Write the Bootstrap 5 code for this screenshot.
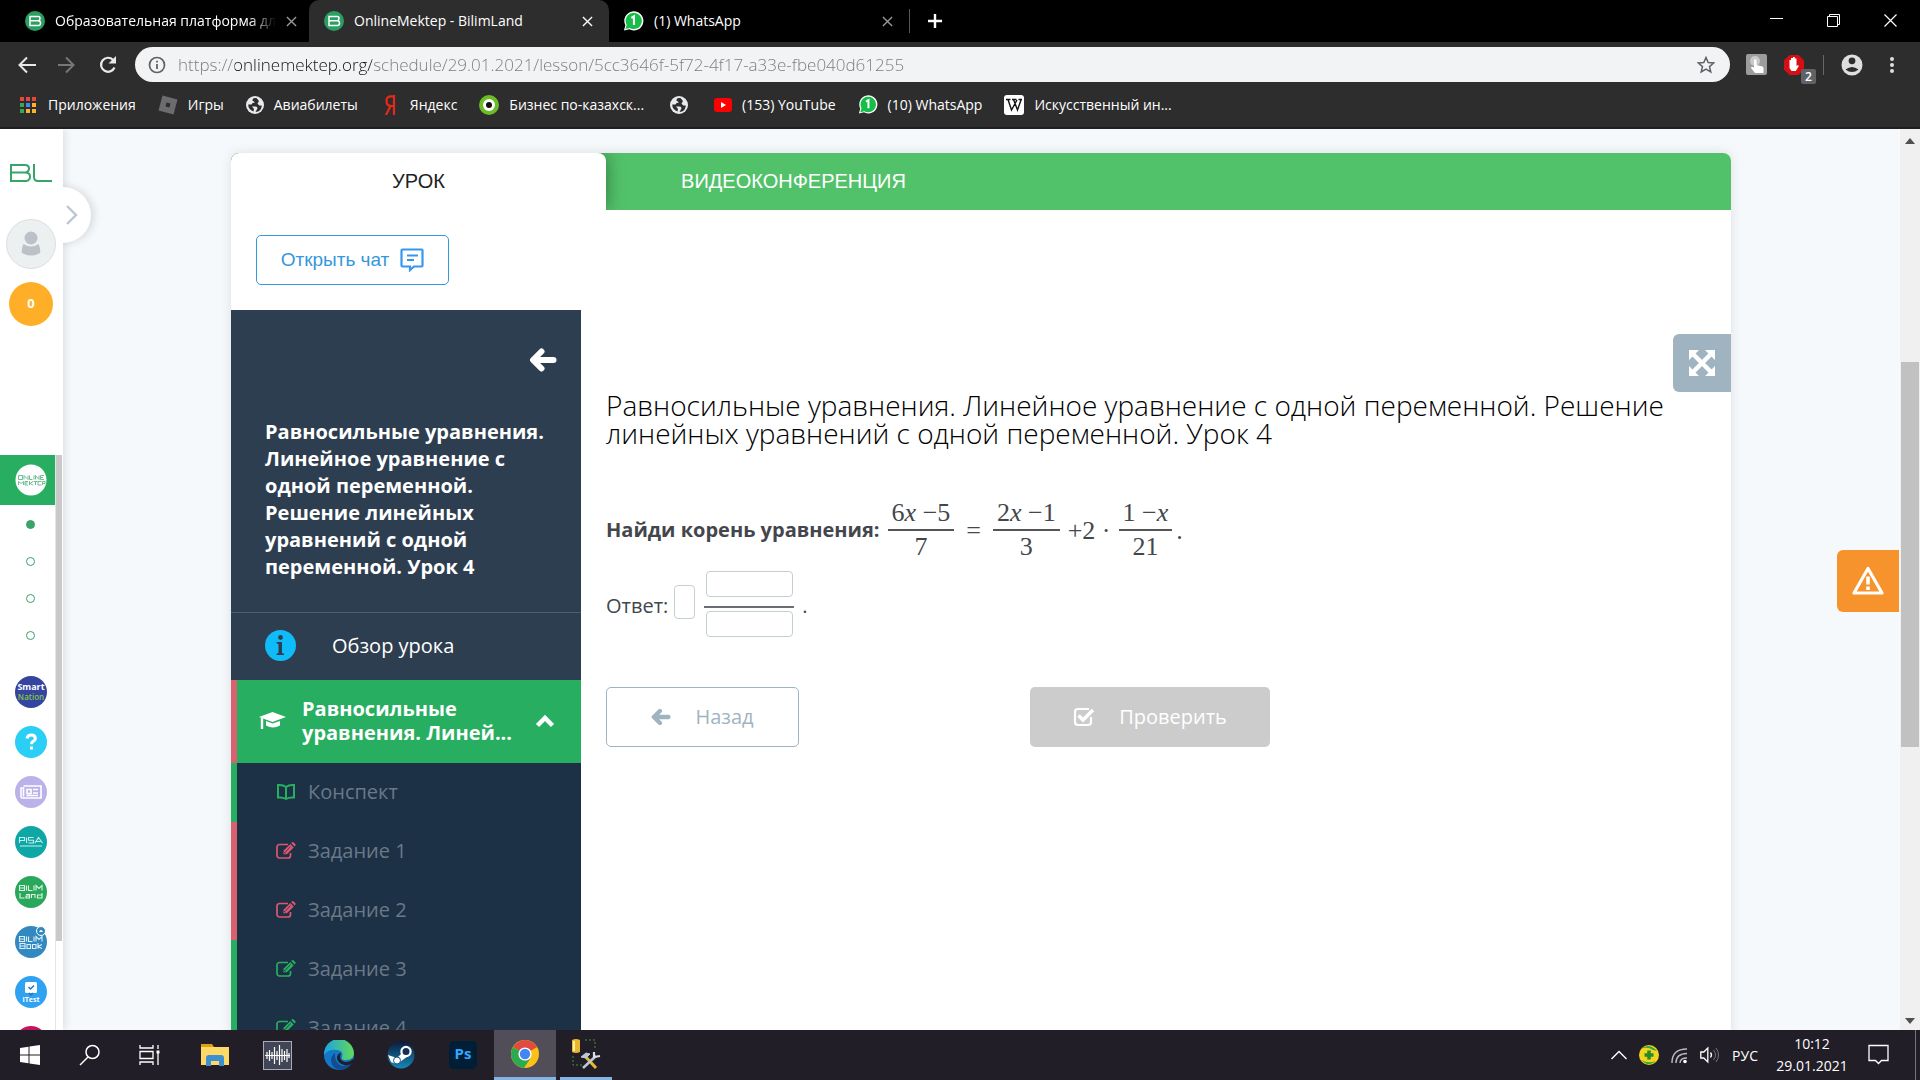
<!DOCTYPE html>
<html lang="ru">
<head>
<meta charset="utf-8">
<meta name="viewport" content="width=device-width, initial-scale=1">
<title>OnlineMektep - BilimLand</title>
<link href="https://cdn.jsdelivr.net/npm/bootstrap@5.3.0/dist/css/bootstrap.min.css" rel="stylesheet">
<style>
:root{--ui:"Open Sans","Noto Sans",sans-serif;--green:#27ae60;--navy:#2d3e50}
body{font-family:var(--ui);background:#f5f9fc;overflow:hidden}
svg{display:block;flex:none}
button,.plain{background:none;border:0;padding:0;color:inherit;text-decoration:none}
/* browser window */
.tabstrip{height:42px;background:#000;color:#fff;font-size:14px}
.btab{height:42px;width:300px;padding:0 12px 0 14px;gap:10px}
.btab.first{width:309px;padding-left:25px}
.btab.on{background:#2d2d2d;border-radius:10px 10px 0 0;padding-left:15px}
.btab button{color:#999;flex:none}
.btab .t{flex:1;min-width:0;white-space:nowrap;overflow:hidden;padding-bottom:2px}
.first .t{-webkit-mask-image:linear-gradient(90deg,#000 88%,transparent);mask-image:linear-gradient(90deg,#000 88%,transparent)}
.wins{gap:43px;padding-right:22px}
.tools{background:#2d2d2d;height:45px;padding:0 25px 0 16px;color:#e8e8e8}
.reload{margin-left:22px}
.more{margin-left:26px}
.omni{background:#f1f3f4;height:35px;border-radius:18px;padding:0 15px 0 13px;margin-left:17px;color:#5f6368}
.omni input{border:0;outline:0;font-family:var(--ui);font-weight:350;font-size:17px;height:35px;margin:0 8px 0 12px;padding:0;background:linear-gradient(90deg,#757a80 57px,#101114 57px,#101114 194px,#757a80 194px);background-clip:text;-webkit-background-clip:text;-webkit-text-fill-color:transparent}
.marks{background:#2d2d2d;height:42px;padding:0 18px 5px;gap:22px;color:#fff;font-size:14px;border-bottom:2px solid #202020}
.marks a{gap:10px;white-space:nowrap}
.extbadge{right:-11px;bottom:-8px;background:#5f6368;color:#fff;font-size:12px;line-height:15px;width:15px;border-radius:2px;text-align:center;font-weight:600}
/* page */
.rail{width:63px;background:#fff;box-shadow:0 0 10px #00000026;z-index:2}
.toggle{left:35px;top:58px;width:56px;height:56px;border-radius:50%;background:#fff;box-shadow:3px 0 8px #00000020;clip-path:inset(-10px -12px -10px 28px);padding-left:30px!important}
.ava{width:50px;height:50px;margin-top:37px;border-radius:50%;background:#ecf0f1;border:1px solid #dcdfe2}
.coins{width:44px;height:44px;margin-top:13px;border-radius:50%;background:#ffae27;color:#fff;font-size:13px;font-weight:700}
.railtop{width:62px;height:326px;padding-top:35px}
.raillist{width:56px;border-right:1px solid #e4e4e4}
.railthumb{width:6px;height:486px;background:#c9c9c9}
.cur{height:50px;width:55px;background:var(--green);padding-left:6px}
.dots{height:163px;padding:15px 0 0 26px;gap:28px}
.dots i{width:9px;height:9px;border:1px solid #3aa26b;border-radius:50%}
.dots i.on{background:#3aa26b}
.apps{padding:8px 0 0 15px;gap:18px}
.lesson{max-width:1500px;margin:24px auto 0;background:#fff;border-radius:8px 8px 0 0;box-shadow:0 0 12px #0000001a}
.tabsbar{height:57px;background:#52c26a;border-radius:8px 8px 0 0;font:20px "Liberation Sans",Arial,sans-serif;overflow:hidden}
.tabsbar .a{width:25%;background:#fff;color:#222;border-radius:8px 8px 0 0;box-shadow:0 0 18px #00000066}
.tabsbar .b{width:25%;color:#fff}
.chat{height:50px;width:193px;margin:25px 0 25px 25px;border:1px solid #3498db;border-radius:5px;color:#3498db;font:19px "Liberation Sans",Arial,sans-serif;gap:11px}
.side{width:350px;background:var(--navy);color:#fff;font-size:20px}
.side h2{font-size:20px;line-height:27px;font-weight:700;padding:0 34px;margin:47px 0 32px}
.backrow{height:61px;padding:38px 24px 0 0}
.over{height:68px;border-top:1px solid #4a5f70;padding:0 0 2px 34px;gap:36px}
.topic{height:83px;background:var(--green);border-left:6px solid #d9606e;line-height:24px;padding:0 26px 2px 22px}
.topic b{margin-left:16px;flex:1;font-weight:700}
.step{height:59px;background:#1c3046;border-left:6px solid var(--green);color:#6a7987;padding:0 0 2px 39px;gap:12px}
.step svg{color:var(--green)}
.step.bad{border-color:#d9606e}.step.bad svg{color:#e0566f}
.work{padding:0 25px;color:#43464c}
.work h1{font-size:28px;line-height:28px;color:#000;margin:81px 0 0;font-weight:350}
.expand{right:0;top:24px;width:58px;height:58px;background:#9fb4c0;border-radius:6px 0 0 6px}
.task{font-size:20px;margin-top:50px;height:66px}
.math{font-family:"Liberation Serif",serif;font-size:26px}
.fr{display:flex;flex-direction:column;text-align:center;line-height:32px}
.fr span:first-child{border-bottom:2px solid #555;padding:0 4px}
.ans{font-size:20px;height:68px;margin-top:7px}
.ans input{border:1px solid #c4cfd3;border-radius:4px;padding:0 3px;background:#fff;width:87px;height:26px}
.ans .whole{width:21px;height:34px;margin:0 9px 4px 6px}
.bar{height:2px;width:90px;margin:9px 0 3px;background:#6a6d73}
.acts{margin-top:49px;gap:231px;font-size:20px}
.acts button{height:60px;border-radius:5px;gap:24px}
.prev{width:193px;border:1px solid #9fb4c0;color:#9fb4c0}
.check{width:240px;background:#ccc;color:#fff}
.vbar{width:21px;background:#f0f0f0;border-left:1px solid #fafafa;padding:9px 0 6px}
.vthumb{width:18px;height:385px;margin-top:218px;background:#c1c1c1}
.warn{right:21px;top:421px;width:62px;height:62px;background:#f7932d;border-radius:6px 0 0 6px;z-index:3}
/* taskbar */
.os{height:50px;background:#211e27;color:#fff;flex:none}
.ic{width:62px;height:50px}
.ic.s{width:60px}
.ic.tool{width:52px}
.run{border-bottom:3px solid #83b4e6}
.run.front{background:#524e59}
.tray{gap:12px}
.clock{font-size:14px;line-height:22px;width:84px}
</style>
<script src="https://cdn.jsdelivr.net/npm/bootstrap@5.3.0/dist/js/bootstrap.bundle.min.js"></script>
</head>
<body class="vh-100 d-flex flex-column">
<svg width="0" height="0" class="position-absolute" aria-hidden="true"><defs>
<symbol id="bl" viewBox="0 0 20 20"><circle cx="10" cy="10" r="10" fill="#2b9e62"/><path d="M5 5.500h8.500q1.500 0 1.500 2t-1.500 2.300q2 .2 2 2.400t-2 2.300H5zM5 9.800h8.500" fill="none" stroke="#fff" stroke-width="1.500"/></symbol>
<symbol id="wa" viewBox="0 0 22 22"><path d="M1 21l1.500-5.500A10 10 0 1 1 6.500 19.600z" fill="#fff"/><path d="M2.500 19.500l1.400-4.300A8.500 8.500 0 1 1 7 18.300z" fill="#16bd48"/><path d="M8.800 7.800l2.700-1.600v9" fill="none" stroke="#fff" stroke-width="2.200"/></symbol>
<symbol id="x" viewBox="0 0 12 12"><path d="M1 1l10 10M11 1L1 11" stroke="currentColor" stroke-width="1.500"/></symbol>
<symbol id="globe" viewBox="0 0 18 18"><circle cx="9" cy="9" r="9" fill="#e8eaed"/><path d="M10.500 2Q6 1.500 6.500 4.500L9 6.500q-3 0-3.500 2H2.200q0 5 5.300 7l.5-2.500-2-2.500h3.500q2 0 2 1.800L9.500 16q6-.5 6.300-6.500h-2.600l-1.700-2 1.500-2.500z" fill="#2d2d2d"/></symbol>
<symbol id="edit" viewBox="0 0 20 18"><path d="M12 2.500H3.500A2.500 2.500 0 0 0 1 5v8.500A2.500 2.500 0 0 0 3.500 16H12a2.500 2.500 0 0 0 2.500-2.500V11" fill="none" stroke="currentColor" stroke-width="1.700"/><path d="M7.500 8.800L14.300 2l3.400 3.400-6.800 6.800H7.500zM15.200 1.100l.9-.8q.7-.5 1.300 0l2 2q.6.700 0 1.300l-.8.9z" fill="currentColor"/><path d="M9 10.500l5.500-6M8 10l1.500 1.500" stroke="#1c3046" stroke-width=".8"/></symbol>
<symbol id="arr" viewBox="0 0 28 24"><path d="M12.500 3.500L4 12l8.500 8.500M5 12h19.500" fill="none" stroke="currentColor" stroke-width="6" stroke-linecap="round" stroke-linejoin="round"/></symbol>
</defs></svg>

<header>
<nav class="tabstrip d-flex align-items-center" aria-label="Вкладки">
 <div class="btab first d-flex align-items-center"><svg width="20" height="20"><use href="#bl"/></svg><span class="t">Образовательная платформа для</span><button aria-label="Закрыть"><svg width="11" height="11"><use href="#x"/></svg></button></div>
 <div class="btab on d-flex align-items-center"><svg width="20" height="20"><use href="#bl"/></svg><span class="t">OnlineMektep - BilimLand</span><button class="text-light me-1" aria-label="Закрыть"><svg width="11" height="11"><use href="#x"/></svg></button></div>
 <div class="btab d-flex align-items-center"><svg width="21" height="22"><use href="#wa"/></svg><span class="t">(1) WhatsApp</span><button class="me-1" aria-label="Закрыть"><svg width="11" height="11"><use href="#x"/></svg></button></div>
 <svg width="40" height="26" viewBox="0 0 40 26"><path d="M0.500 1v24" stroke="#555"/><path d="M26 6v14M19 13h14" stroke="#fff" stroke-width="2.400"/></svg>
 <div class="wins ms-auto d-flex align-items-center">
  <button aria-label="Свернуть"><svg width="14" height="14"><path d="M0 4.500h13" stroke="#fff"/></svg></button>
  <button aria-label="Окно"><svg width="14" height="14"><path d="M.5 2.500h10v10H.5zM2.500 2.500v-2h10v10h-2" fill="none" stroke="#fff"/></svg></button>
  <button aria-label="Закрыть окно"><svg width="14" height="14"><path d="M.5.500l12 12M12.500.500l-12 12" stroke="#fff" stroke-width="1.200"/></svg></button>
 </div>
</nav>
<div class="tools d-flex align-items-center">
 <button aria-label="Назад"><svg width="22" height="20"><path d="M20 10H4M11 2.500L3.500 10l7.500 7.500" fill="none" stroke="#e8e8e8" stroke-width="2"/></svg></button>
 <button class="ms-3" aria-label="Вперед"><svg width="22" height="20"><path d="M4 10h16M12 2.500l7.500 7.500-7.500 7.500" fill="none" stroke="#777" stroke-width="2"/></svg></button>
 <button class="reload" aria-label="Обновить"><svg width="20" height="20"><path d="M16.500 12.500A7 7 0 1 1 15 4.800" fill="none" stroke="#e8e8e8" stroke-width="2.200"/><path d="M18 1v7.500h-7.500z" fill="#e8e8e8"/></svg></button>
 <div class="omni d-flex align-items-center flex-grow-1">
  <svg width="18" height="18"><circle cx="9" cy="9" r="7.500" fill="none" stroke="#5f6368" stroke-width="1.700"/><path d="M9 8v5M9 4.800v1.800" stroke="#5f6368" stroke-width="1.800"/></svg>
  <input class="flex-grow-1" type="text" aria-label="Адрес" value="https://onlinemektep.org/schedule/29.01.2021/lesson/5cc3646f-5f72-4f17-a33e-fbe040d61255">
  <svg width="18" height="18"><path d="M9 1.500l2.200 5.100 5.500.4-4.200 3.600 1.300 5.400L9 13.100 4.200 16l1.300-5.400L1.300 7l5.500-.4z" fill="none" stroke="#5f6368" stroke-width="1.500"/></svg>
 </div>
 <button class="ms-3" aria-label="Расширение"><svg width="21" height="21"><rect width="21" height="21" rx="2" fill="#9c9c9c"/><circle cx="9" cy="7" r="5" fill="#c9c9c9"/><path d="M8 6q1.500-1.500 2.500 0v5l6 1.500q1 .5 1 2V19H9l-4-5q0-2 3-.500z" fill="#fff"/></svg></button>
 <button class="ms-3 position-relative" aria-label="AdBlock"><svg width="22" height="22"><path d="M6.500 1h9L21 6.500v9L15.500 21h-9L1 15.500v-9z" fill="#d80f12"/><path d="M6.500 10V6h1.500v4V4h2v6-7h1.800v7-5.500h1.700V12l1.500-1 .8 1-3 5H8.500l-2-3z" fill="#fff"/></svg><span class="extbadge position-absolute">2</span></button>
 <svg class="ms-3" width="4" height="20"><path d="M2.500 0v20" stroke="#666"/></svg>
 <button class="ms-3" aria-label="Профиль"><svg width="22" height="22"><circle cx="11" cy="11" r="10.500" fill="#dedede"/><circle cx="11" cy="6.800" r="3.400" fill="#2d2d2d"/><path d="M4.500 15.500q6.500-5 13 0-6.500 5-13 0z" fill="#2d2d2d"/></svg></button>
 <button class="more" aria-label="Меню"><svg width="6" height="18"><g fill="#dedede"><circle cx="3" cy="3" r="2"/><circle cx="3" cy="9" r="2"/><circle cx="3" cy="15" r="2"/></g></svg></button>
</div>
<nav class="marks d-flex align-items-center" aria-label="Закладки">
 <a class="plain d-flex align-items-center" href="#"><svg width="20" height="18"><g fill="#e8453c"><path d="M2 1h4v4H2zM8 1h4v4H8zM14 1h4v4h-4z"/></g><path d="M2 7h4v4H2zM2 13h4v4H2z" fill="#34a853"/><path d="M8 7h4v4H8z" fill="#4285f4"/><path d="M8 13h4v4H8zM14 7h4v4h-4zM14 13h4v4h-4z" fill="#fbb32d"/></svg>Приложения</a>
 <a class="plain d-flex align-items-center" href="#"><svg width="20" height="20"><path d="M4.500.500L19.500 4.500 15.500 19.500.500 15.500z" fill="#6c6c6e"/><path d="M8.500 7.500l4 1-1 4-4-1z" fill="#2d2d2d"/></svg>Игры</a>
 <a class="plain d-flex align-items-center" href="#"><svg width="18" height="18"><use href="#globe"/></svg>Авиабилеты</a>
 <a class="plain d-flex align-items-center" href="#"><svg width="20" height="20"><path d="M14 0v20M14 1.300h-3Q6.500 1.300 6.500 6t4.500 5h3M10.500 11L6 20" fill="none" stroke="#e52a1a" stroke-width="2.200"/></svg>Яндекс</a>
 <a class="plain d-flex align-items-center" href="#"><svg width="20" height="20"><circle cx="10" cy="10" r="10" fill="#6dbb27"/><circle cx="10" cy="10" r="6" fill="#fff"/><circle cx="10" cy="10" r="3" fill="#111"/></svg>Бизнес по-казахск...</a>
 <a class="plain d-flex align-items-center px-1" href="#" aria-label="Закладка"><svg width="18" height="18"><use href="#globe"/></svg></a>
 <a class="plain d-flex align-items-center" href="#"><svg width="18" height="18"><rect y="2" width="18" height="14" rx="3" fill="#f00"/><path d="M7 6l5 3-5 3z" fill="#fff"/></svg>(153) YouTube</a>
 <a class="plain d-flex align-items-center" href="#"><svg width="20" height="21"><use href="#wa"/></svg>(10) WhatsApp</a>
 <a class="plain d-flex align-items-center" href="#"><svg width="20" height="20"><rect width="20" height="20" rx="3" fill="#fff"/><path d="M2 4.500h4.500M8 4.500h4.500M14.500 4.500H18M4 4.500L7.500 15 13 5M9.500 4.500L13.500 15l3.500-10" fill="none" stroke="#111" stroke-width="1.400"/></svg>Искусственный ин...</a>
</nav>
</header>

<div class="d-flex flex-grow-1 position-relative overflow-hidden">
<aside class="rail flex-shrink-0 position-relative d-flex flex-column">
 <button class="toggle position-absolute" aria-label="Развернуть меню"><svg width="14" height="22"><path d="M2 2l9 9-9 9" fill="none" stroke="#bcc6d0" stroke-width="2.400"/></svg></button>
 <div class="railtop d-flex flex-column align-items-center flex-shrink-0">
  <svg width="42" height="18"><path d="M1 1h14q4 0 4 3.500T15 8.500H1M15 8.500q5 0 5 4t-4 4.500H1V0M24 0v13q0 4 4 4h14" fill="none" stroke="#37a56a" stroke-width="2"/></svg>
  <div class="ava d-flex align-items-center justify-content-center"><svg width="20" height="26"><circle cx="10" cy="7" r="6.500" fill="#bcc1c7"/><path d="M2.500 13q7.500 5 15 0 2.500 5 1.500 9-9 5-18 0-1-4 1.500-9z" fill="#bcc1c7"/></svg></div>
  <div class="coins d-flex align-items-center justify-content-center">0</div>
 </div>
 <div class="d-flex flex-grow-1 overflow-hidden">
 <nav class="raillist flex-shrink-0" aria-label="Сервисы">
  <a href="#" class="cur plain d-flex align-items-center justify-content-center" aria-label="Online Mektep"><svg width="32" height="32"><circle cx="16" cy="16" r="15.500" fill="#fff"/><g fill="none" stroke="#72bd93" stroke-width="1"><path d="M3.500 11.500h4v4h-4zM9 15.500v-4l4 4v-4M14.500 11.500v4h3M19 11.500v4M20.500 15.500v-4l3.500 4v-4M29 11.500h-3.500v4H29M25.500 13.500H28M3.500 21v-3.500l2.500 2 2.500-2V21M13 17.500h-3V21h3M10 19h2.500M14.500 17v4M18 17.500l-3 2 3 1.500M18.500 17.500h4M20.500 17.500V21M26.500 17.500H23V21h3.500M27.500 21v-3.500H30v2h-2.500"/></g></svg></a>
  <div class="dots d-flex flex-column"><i class="on"></i><i></i><i></i><i></i></div>
  <div class="apps d-flex flex-column">
   <svg width="32" height="32" viewBox="0 0 32 32"><circle cx="16" cy="16" r="16" fill="#34449f"/><text x="16" y="14" font-size="9" font-weight="700" fill="#fff" text-anchor="middle">Smart</text><text x="16" y="24" font-size="8" font-weight="600" fill="#86c440" text-anchor="middle">Nation</text></svg>
   <svg width="32" height="32"><circle cx="16" cy="16" r="16" fill="#2bcff5"/><path d="M12 12.500q.5-3.500 4.300-3.500 4 0 4 3.300 0 2-2.200 3-1.600.8-1.600 3M16.500 20.500v3" fill="none" stroke="#fff" stroke-width="3"/></svg>
   <svg width="32" height="32"><circle cx="16" cy="16" r="16" fill="#bbb2ea"/><path d="M8.500 10H26v12H7.500Q6 22 6 20.500V12h2.500v8.500M12 13.500h4v4h-4zM18 13.500h5M18 17h5M11.500 19.500H23" fill="none" stroke="#fff" stroke-width="1.600"/></svg>
   <svg width="32" height="32"><circle cx="16" cy="16" r="16" fill="#0fa7a6"/><path d="M4.500 17v-5.500h5v3h-5M11.500 11.500V17M18.500 11.500h-5v2.700h5V17h-5M20 17l3.500-5.500L27.500 17M21.500 15.500h4M5 20h22" fill="none" stroke="#c5f1ec" stroke-width="1.100"/></svg>
   <svg width="32" height="32"><circle cx="16" cy="16" r="16" fill="#29a85b"/><path d="M4.500 9.500h5v5h-5zM4.500 12h5M11.500 9.500v5M13.500 9.500v5h4M19 9.500v5M21 14.500v-5l3 3 3-3v5M5 17v5h4.500M11 18.500h3.500V22H11v-2h3.500M16.500 22v-3.500H20V22M27 17v5h-4.500v-3H27" fill="none" stroke="#dff5e6" stroke-width="1.100"/></svg>
   <svg width="32" height="32"><circle cx="16" cy="16" r="16" fill="#3289bf"/><path d="M4.500 10.500h5v5h-5zM4.500 13h5M11.500 10.500v5M13.500 10.500v5h4M19 10.500v5M21 15.500v-5l3 3 3-3v5M5 17.500h5v5H5zM5 20h5M12 18.500h3.500v4H12zM17.500 18.500H21v4h-3.500zM23 17v5.500M27 18.500l-4 2 4 2" fill="none" stroke="#dbeefa" stroke-width="1.100"/><circle cx="26" cy="5" r="4.500" fill="#3289bf" stroke="#fff"/><path d="M24 6q2-4 4 0z" fill="#fff"/></svg>
   <svg width="32" height="32" viewBox="0 0 32 32"><circle cx="16" cy="16" r="16" fill="#2fa3f2"/><rect x="10" y="6" width="12" height="11" rx="1.500" fill="#fff"/><path d="M13.500 11l2 2 3.500-3.500M14 17l2 2 2-2" fill="none" stroke="#2277bb" stroke-width="1.500"/><text x="16" y="26" font-size="7" font-weight="700" fill="#fff" text-anchor="middle">iTest</text></svg>
   <svg width="32" height="32"><circle cx="16" cy="16" r="16" fill="#c8145c"/></svg>
  </div>
 </nav>
 <div class="railthumb"></div>
 </div>
</aside>

<main class="flex-grow-1 overflow-hidden">
 <div class="lesson">
  <div class="tabsbar d-flex"><button class="a">УРОК</button><button class="b px-3">ВИДЕОКОНФЕРЕНЦИЯ</button></div>
  <button class="chat d-flex align-items-center justify-content-center">Открыть чат <svg width="24" height="24"><path d="M2.500 1.500h19q1 0 1 1v15q0 1-1 1H14l-4 3.500v-3.500H2.500q-1 0-1-1v-15q0-1 1-1zM7 7.500h11M7 12h7" fill="none" stroke="#3498ee" stroke-width="2.200"/></svg></button>
  <div class="d-flex">
   <aside class="side flex-shrink-0">
    <div class="backrow d-flex justify-content-end"><button class="text-white" aria-label="Свернуть"><svg width="28" height="24"><use href="#arr"/></svg></button></div>
    <h2>Равносильные уравнения. Линейное уравнение с одной переменной. Решение линейных уравнений с одной переменной. Урок 4</h2>
    <a href="#" class="over text-decoration-none d-flex align-items-center text-white"><svg width="31" height="31"><circle cx="15.500" cy="15.500" r="15.500" fill="#0fbcf9"/><circle cx="15.500" cy="7.500" r="2.400" fill="#2d3e50"/><path d="M11.500 12h5.500v11l2 .8V25h-7.500v-1.200l2-.8v-9l-2-.7z" fill="#2d3e50"/></svg>Обзор урока</a>
    <a href="#" class="topic text-decoration-none d-flex align-items-center text-white"><svg width="27" height="20"><path d="M13.500 1L27 6l-13.500 5L0 6z" fill="#fff"/><path d="M7 10l6.500 2.500L21 10v4.500q-7 4-14 0z" fill="#fff"/><path d="M3 7v11" stroke="#fff" stroke-width="2.400"/></svg><b>Равносильные<br>уравнения. Линей...</b><svg width="20" height="16"><path d="M2.500 12.500L10 5l7.500 7.500" fill="none" stroke="#fff" stroke-width="4.500"/></svg></a>
    <a href="#" class="step text-decoration-none d-flex align-items-center"><svg width="20" height="18"><path d="M10 4Q7 1.500 2 2v12.500q5-.5 8 1.500 3-2 8-1.500V2q-5-.5-8 2zv12" fill="none" stroke="currentColor" stroke-width="2"/></svg>Конспект</a>
    <a href="#" class="step bad text-decoration-none d-flex align-items-center"><svg width="20" height="18"><use href="#edit"/></svg>Задание 1</a>
    <a href="#" class="step bad text-decoration-none d-flex align-items-center"><svg width="20" height="18"><use href="#edit"/></svg>Задание 2</a>
    <a href="#" class="step text-decoration-none d-flex align-items-center"><svg width="20" height="18"><use href="#edit"/></svg>Задание 3</a>
    <a href="#" class="step text-decoration-none d-flex align-items-center"><svg width="20" height="18"><use href="#edit"/></svg>Задание 4</a>
   </aside>
   <section class="work flex-grow-1 position-relative">
    <button class="expand position-absolute d-flex align-items-center justify-content-center" aria-label="На весь экран"><svg width="28" height="28"><path d="M5 5l18 18M23 5L5 23" stroke="#fff" stroke-width="4.500"/><path d="M1 1h10L1 11zM27 1v10L17 1zM1 27V17l10 10zM27 27H17l10-10z" fill="#fff"/></svg></button>
    <h1>Равносильные уравнения. Линейное уравнение с одной переменной. Решение линейных уравнений с одной переменной. Урок 4</h1>
    <div class="task d-flex align-items-center"><b>Найди корень уравнения:</b>
     <div class="math d-flex align-items-center ms-2"><div class="fr"><span>6<i>x</i> −5</span><span>7</span></div><span class="px-2 mx-1">=</span><div class="fr"><span>2<i>x</i> −1</span><span>3</span></div><span class="px-2">+2 ·</span><div class="fr"><span>1 −<i>x</i></span><span>21</span></div><span class="ps-1">.</span></div></div>
    <div class="ans d-flex align-items-center"><label class="pt-1" for="whole">Ответ:</label><input id="whole" class="whole"><div class="d-flex flex-column align-items-center"><input aria-label="Числитель"><div class="bar"></div><input aria-label="Знаменатель"></div><span class="ms-2 pt-1">.</span></div>
    <div class="acts d-flex"><button class="prev d-flex align-items-center justify-content-center"><svg width="20" height="18"><use href="#arr"/></svg>Назад</button><button class="check d-flex align-items-center justify-content-center"><svg width="22" height="20"><path d="M18 10v5q0 3-3 3H5q-3 0-3-3V5q0-3 3-3h11" fill="none" stroke="#fff" stroke-width="2.200"/><path d="M5.500 8.500l4.500 4.500L20 3" fill="none" stroke="#fff" stroke-width="3.500"/></svg>Проверить</button></div>
   </section>
  </div>
 </div>
</main>
<button class="warn position-absolute d-flex align-items-center justify-content-center" aria-label="Сообщить об ошибке"><svg width="34" height="32"><path d="M17 3.500L31 28H3z" fill="none" stroke="#fff" stroke-width="3.200" stroke-linejoin="round"/><path d="M17 11.500v8M17 21.500v3.500" stroke="#fff" stroke-width="3.600"/></svg></button>
<div class="vbar flex-shrink-0 d-flex flex-column align-items-center"><svg width="10" height="6"><path d="M0 6l5-6 5 6z" fill="#505050"/></svg><div class="vthumb"></div><svg class="mt-auto" width="10" height="6"><path d="M0 0l5 6 5-6z" fill="#505050"/></svg></div>
</div>

<footer class="os d-flex align-items-center">
 <button class="ic s d-flex align-items-center justify-content-center" aria-label="Пуск"><svg width="20" height="20"><path d="M0 3l8.500-1.300v7.800H0zM9.500 1.500L20 0v9.500H9.500zM0 10.500h8.500v7.800L0 17zM9.500 10.500H20V20L9.500 18.500z" fill="#fff"/></svg></button>
 <button class="ic s d-flex align-items-center justify-content-center" aria-label="Поиск"><svg width="22" height="22"><circle cx="13.500" cy="8" r="6.500" fill="none" stroke="#fff" stroke-width="1.500"/><path d="M9 13l-8 8" stroke="#fff" stroke-width="1.500"/></svg></button>
 <button class="ic s d-flex align-items-center justify-content-center" aria-label="Задачи"><svg width="22" height="20"><path d="M1 0v3h13V0M1 20v-3h13v3M1 6.500h13v7H1zM19 0v4M19 8v12" fill="none" stroke="#fff" stroke-width="1.300"/><path d="M17.500 5.500h3v3h-3z" fill="#fff"/></svg></button>
 <button class="ic d-flex align-items-center justify-content-center ms-1" aria-label="Проводник"><svg width="28" height="24"><path d="M0 1h11l2 3H0z" fill="#dca017"/><path d="M0 4h28v18H0z" fill="#ffd968"/><path d="M5 23v-8q0-3 3-3h12q3 0 3 3v8h-5v-5h-8v5z" fill="#3f8fcf"/></svg></button>
 <button class="ic d-flex align-items-center justify-content-center" aria-label="Аудио"><svg width="29" height="29"><rect x=".5" y=".5" width="28" height="28" fill="#414656" stroke="#aab"/><path d="M2 14.500h25M4 11v7M6.500 9v11M9 11v7M11.500 6v17M14 10v9M16.500 4v20M19 8v13M21.500 10v9M24 8v13M26 12v5" stroke="#fff" stroke-width="1.200"/></svg></button>
 <button class="ic d-flex align-items-center justify-content-center" aria-label="Edge"><svg width="30" height="30"><defs><linearGradient id="eg"><stop stop-color="#1da1e6"/><stop offset="1" stop-color="#62d957"/></linearGradient></defs><circle cx="15" cy="15" r="15" fill="#1279c9"/><path d="M0 15A15 15 0 0 1 30 13q0 7-8 7-5 0-4-3 2-6-5-7Q4 9 0 15z" fill="url(#eg)"/><path d="M11 15q0 9 8 11 5 0 9-3-4 7-12 7Q7 28 7 20q0-4 4-7z" fill="#124d91"/><path d="M17 13q-3 7 4 9 5 0 8-3v4q-5 3-9 2-7-2-7-8 1-4 4-4z" fill="#211e27"/></svg></button>
 <button class="ic d-flex align-items-center justify-content-center" aria-label="Steam"><svg width="28" height="28"><defs><linearGradient id="st" x2="0" y2="1"><stop stop-color="#0a1b3d"/><stop offset="1" stop-color="#1788b8"/></linearGradient></defs><circle cx="14" cy="14" r="13.500" fill="url(#st)"/><path d="M1 14l9 3 6-6 5 4-8 6-4 2-5-2z" fill="#fff"/><circle cx="19" cy="10.500" r="4.600" fill="#162d55" stroke="#fff" stroke-width="2.200"/><circle cx="10" cy="19.500" r="3.500" fill="#fff" stroke="#15547f"/></svg></button>
 <button class="ic d-flex align-items-center justify-content-center" aria-label="Photoshop"><svg width="28" height="28" viewBox="0 0 28 28"><rect width="28" height="28" rx="5" fill="#001e36"/><text x="14" y="18" font-size="15" font-weight="700" fill="#31a8ff" text-anchor="middle">Ps</text></svg></button>
 <button class="ic run front d-flex align-items-center justify-content-center" aria-label="Chrome"><svg width="28" height="28"><circle cx="14" cy="14" r="14" fill="#fbc116"/><path d="M14 14L2 7a14 14 0 0 1 24.200 0z" fill="#e04a3f"/><path d="M14 14L1.900 7A14 14 0 0 0 13 28l6-9z" fill="#2da94f"/><circle cx="14" cy="14" r="6.600" fill="#fff"/><circle cx="14" cy="14" r="5.200" fill="#4285f4"/></svg></button>
 <button class="ic tool run d-flex align-items-center justify-content-center ms-1" aria-label="Инструменты"><svg width="30" height="32"><path d="M1 2q4-2 8 0v12q-4 2-8 0z" fill="#e8b62e"/><path d="M3 3v10" stroke="#fff0a0" stroke-width="2"/><path d="M14 2h10v10M2 18v9h9" fill="none" stroke="#3d9a35" stroke-dasharray="2 2"/><path d="M13 17l12 13" stroke="#e5ba30" stroke-width="3"/><path d="M10 19l5-4 4 1-4 4z" fill="#bdc7d6" stroke="#bdc7d6"/><path d="M12 30L25 18" stroke="#bdc7d6" stroke-width="2.500"/><path d="M23 14v5l6-1" fill="none" stroke="#d8dfe8" stroke-width="2.200"/></svg></button>
 <div class="tray ms-auto d-flex align-items-center">
  <svg width="16" height="10"><path d="M.5 9L8 1.500 15.500 9" fill="none" stroke="#fff" stroke-width="1.400"/></svg>
  <svg width="20" height="20"><circle cx="10" cy="10" r="10" fill="#f3d51f"/><path d="M2 4q8-7 16 2l-4-1Q8 1 2 4zM2 15q8 8 15 1-8 3-15-1z" fill="#37a63b"/><path d="M10 5.500v9M5.500 10h9" stroke="#238a2d" stroke-width="3.500"/></svg>
  <svg width="17" height="17"><path d="M1 16Q1 2 16 2M5 16Q5 6.500 16 6.500M9 16q0-5 7-5" fill="none" stroke="#bbb" stroke-width="1.400"/><circle cx="14" cy="14.500" r="1.800" fill="#fff"/></svg>
  <svg width="20" height="18"><path d="M.8 6h3l4-4v14l-4-4h-3zM10.500 6.500q2 2.500 0 5" fill="none" stroke="#fff" stroke-width="1.300"/><path d="M13.500 4q4 5 0 10M16 2q5 7 0 14" fill="none" stroke="#777"/></svg>
  <span class="small">РУС</span>
  <div class="clock text-center">10:12<br>29.01.2021</div>
  <svg width="24" height="22"><path d="M3 1.500h19v15h-6.500l-3 3-3-3H3z" fill="none" stroke="#fff" stroke-width="1.300"/></svg>
  <svg width="18" height="50"><path d="M13.500 0v50" stroke="#777"/></svg>
 </div>
</footer>
</body>
</html>
